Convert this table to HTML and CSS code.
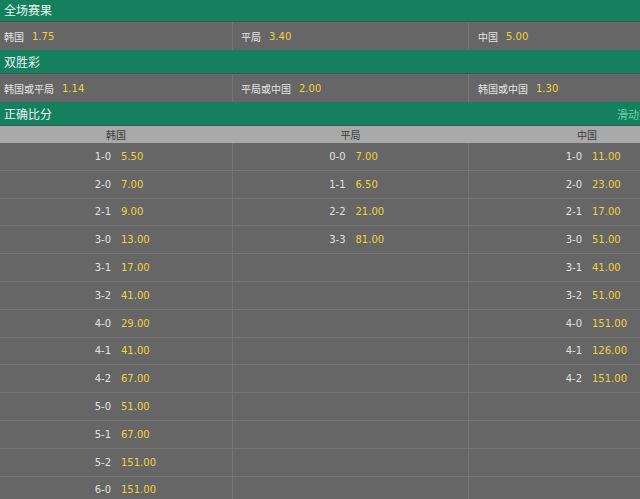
FILE: index.html
```html
<!DOCTYPE html>
<html lang="zh-CN">
<head>
<meta charset="utf-8">
<title>赔率</title>
<link rel="stylesheet" href="styles.css">
</head>
<body>
<div class="page">
  <div class="mhead"><span class="title">全场赛果</span></div>
  <div class="orow">
    <div class="ocell"><span class="lbl">韩国</span><span class="odd">1.75</span></div>
    <div class="ocell"><span class="lbl">平局</span><span class="odd">3.40</span></div>
    <div class="ocell"><span class="lbl">中国</span><span class="odd">5.00</span></div>
  </div>

  <div class="mhead"><span class="title">双胜彩</span></div>
  <div class="orow">
    <div class="ocell"><span class="lbl">韩国或平局</span><span class="odd">1.14</span></div>
    <div class="ocell"><span class="lbl">平局或中国</span><span class="odd">2.00</span></div>
    <div class="ocell"><span class="lbl">韩国或中国</span><span class="odd">1.30</span></div>
  </div>

  <div class="mhead"><span class="title">正确比分</span><span class="hint">滑动查看更多</span></div>
  <div class="srow shead"><div class="hcell">韩国</div><div class="hcell">平局</div><div class="hcell">中国</div></div>

  <div class="srow">
    <div class="sc"><span class="score">1-0</span><span class="odd">5.50</span></div>
    <div class="sc"><span class="score">0-0</span><span class="odd">7.00</span></div>
    <div class="sc"><span class="score">1-0</span><span class="odd">11.00</span></div>
  </div>
  <div class="srow">
    <div class="sc"><span class="score">2-0</span><span class="odd">7.00</span></div>
    <div class="sc"><span class="score">1-1</span><span class="odd">6.50</span></div>
    <div class="sc"><span class="score">2-0</span><span class="odd">23.00</span></div>
  </div>
  <div class="srow">
    <div class="sc"><span class="score">2-1</span><span class="odd">9.00</span></div>
    <div class="sc"><span class="score">2-2</span><span class="odd">21.00</span></div>
    <div class="sc"><span class="score">2-1</span><span class="odd">17.00</span></div>
  </div>
  <div class="srow">
    <div class="sc"><span class="score">3-0</span><span class="odd">13.00</span></div>
    <div class="sc"><span class="score">3-3</span><span class="odd">81.00</span></div>
    <div class="sc"><span class="score">3-0</span><span class="odd">51.00</span></div>
  </div>
  <div class="srow">
    <div class="sc"><span class="score">3-1</span><span class="odd">17.00</span></div>
    <div class="sc"></div>
    <div class="sc"><span class="score">3-1</span><span class="odd">41.00</span></div>
  </div>
  <div class="srow">
    <div class="sc"><span class="score">3-2</span><span class="odd">41.00</span></div>
    <div class="sc"></div>
    <div class="sc"><span class="score">3-2</span><span class="odd">51.00</span></div>
  </div>
  <div class="srow">
    <div class="sc"><span class="score">4-0</span><span class="odd">29.00</span></div>
    <div class="sc"></div>
    <div class="sc"><span class="score">4-0</span><span class="odd">151.00</span></div>
  </div>
  <div class="srow">
    <div class="sc"><span class="score">4-1</span><span class="odd">41.00</span></div>
    <div class="sc"></div>
    <div class="sc"><span class="score">4-1</span><span class="odd">126.00</span></div>
  </div>
  <div class="srow">
    <div class="sc"><span class="score">4-2</span><span class="odd">67.00</span></div>
    <div class="sc"></div>
    <div class="sc"><span class="score">4-2</span><span class="odd">151.00</span></div>
  </div>
  <div class="srow">
    <div class="sc"><span class="score">5-0</span><span class="odd">51.00</span></div>
    <div class="sc"></div>
    <div class="sc"></div>
  </div>
  <div class="srow">
    <div class="sc"><span class="score">5-1</span><span class="odd">67.00</span></div>
    <div class="sc"></div>
    <div class="sc"></div>
  </div>
  <div class="srow">
    <div class="sc"><span class="score">5-2</span><span class="odd">151.00</span></div>
    <div class="sc"></div>
    <div class="sc"></div>
  </div>
  <div class="srow">
    <div class="sc"><span class="score">6-0</span><span class="odd">151.00</span></div>
    <div class="sc"></div>
    <div class="sc"></div>
  </div>
</div>
</body>
</html>
```

FILE: styles.css
```css
html, body {
  margin: 0;
  padding: 0;
  background: #666666;
  overflow: hidden;
}

.page {
  width: 705px;
  margin-top: -2px;
  font-family: "DejaVu Sans", "Noto Sans CJK SC", sans-serif;
  font-size: 10px;
  color: #e2e2e2;
}

.mhead {
  height: 23px;
  border-bottom: 1px solid #3b5a4e;
  background: #14805e;
  display: flex;
  align-items: center;
  justify-content: space-between;
  padding: 0 22px 0 4px;
}

.title {
  font-family: "Noto Sans CJK SC", sans-serif;
  font-size: 12px;
  color: #e8f2ee;
}

.hint {
  font-family: "Noto Sans CJK SC", sans-serif;
  font-size: 11px;
  color: #63d3a2;
}

.orow {
  display: grid;
  grid-template-columns: 232px 236px 237px;
  height: 28px;
  background: #666666;
}

.ocell {
  display: flex;
  align-items: center;
  gap: 8px;
  padding-left: 4px;
}

.ocell + .ocell {
  border-left: 1px solid #747474;
  padding-left: 8px;
}

.ocell + .ocell + .ocell {
  padding-left: 9px;
}

.lbl {
  font-family: "Noto Sans CJK SC", sans-serif;
  font-size: 10px;
  color: #e4e4e4;
}

.odd {
  color: #f0d23c;
}

.srow {
  display: grid;
  grid-template-columns: 232px 236px 237px;
  height: 27.8px;
  box-sizing: border-box;
  border-bottom: 1px solid #757575;
}

.srow.shead {
  height: 17px;
  background: #a9a9a9;
  border-bottom: none;
}

.hcell {
  display: flex;
  align-items: center;
  justify-content: center;
  font-family: "Noto Sans CJK SC", sans-serif;
  font-size: 10px;
  color: #3e3e3e;
}

.hcell + .hcell {
  padding-left: 1px;
}

.sc {
  display: grid;
  grid-template-columns: 1fr 1fr;
  column-gap: 10px;
  align-items: center;
}

.sc + .sc {
  border-left: 1px solid #757575;
}

.score {
  text-align: right;
  color: #e2e2e2;
}

.sc .odd {
  text-align: left;
}
```
